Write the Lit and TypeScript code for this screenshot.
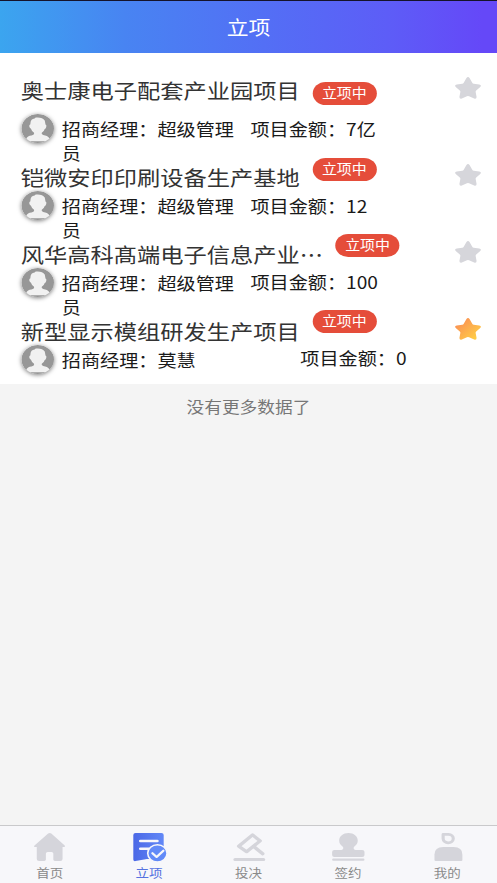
import { LitElement, html, svg, css } from "lit";
import { customElement, property } from "lit/decorators.js";
import { classMap } from "lit/directives/class-map.js";

interface Project {
  name: string;
  manager: string;
  amount: string;
  status: string;
  starred: boolean;
}

const projects: Project[] = [
  { name: "奥士康电子配套产业园项目", manager: "超级管理员", amount: "7亿", status: "立项中", starred: false },
  { name: "铠微安印印刷设备生产基地", manager: "超级管理员", amount: "12", status: "立项中", starred: false },
  { name: "风华高科髙端电子信息产业⋯", manager: "超级管理员", amount: "100", status: "立项中", starred: false },
  { name: "新型显示模组研发生产项目", manager: "莫慧", amount: "0", status: "立项中", starred: true },
];

const tabs = [
  {
    label: "首页",
    icon: svg`<path fill="currentColor" d="M12.8.6q1.4-1.1 2.8 0L27.5 12.4q1.1 1.4-.6 1.6h-1.3V26q0 2-2 2h-4.8q-1.400 0-1.400-1.400v-6q0-1.600-1.600-1.600h-3.400q-1.600 0-1.600 1.600v6q0 1.400-1.400 1.400H4.700q-2 0-2-2V14H1.300q-1.700-.2-.6-1.600z"/>`,
  },
  {
    label: "立项",
    icon: svg`
      <defs><linearGradient id="doc" x1="0" y1="0" x2="1" y2="0"><stop offset="0" stop-color="#4b68e6"/><stop offset="1" stop-color="#6288f7"/></linearGradient></defs>
      <path fill="url(#doc)" d="M1.500 0h23q2 0 2 2v17l-8 7h-7q-1.200 0-2.400.5L1.500 28.100Q-.5 28.500-.5 26.500V2q0-2 2-2z"/>
      <path stroke="#f7f7fa" stroke-width="2.600" stroke-linecap="round" d="M5.800 8h15M5.800 15.700h7.500"/>
      <circle cx="20.900" cy="20.300" r="8.600" fill="#628af8" stroke="#f7f7fa" stroke-width="1.400"/>
      <path fill="none" stroke="#f7f7fa" stroke-width="2.100" stroke-linecap="round" stroke-linejoin="round" d="M16.500 20.200l3.700 3.700 6-6.200"/>`,
  },
  {
    label: "投决",
    icon: svg`
      <path fill="none" stroke="currentColor" stroke-width="3.200" stroke-linejoin="round" d="M17.500 1.900l6.700 6L12.200 18.700l-7-5.500z"/>
      <path stroke="currentColor" stroke-width="3.200" stroke-linecap="round" d="M18.500 13.500l8 7.200M2 26.500h25.200"/>`,
  },
  {
    label: "签约",
    icon: svg`
      <path fill="currentColor" d="M14.800 0C19.500 0 23 3.300 23 7.600c0 2.800-1.200 4.500-3 6-1.200 1.100-.7 3.400 1 3.400h6q2 0 2 2v3q0 2-2 2H2.200q-2 0-2-2v-3q0-2 2-2h6.300c1.700 0 2.200-2.300 1-3.400-1.800-1.500-3-3.200-3-6C6.500 3.300 10 0 14.800 0z"/>
      <path stroke="currentColor" stroke-width="2.200" stroke-linecap="round" d="M1.300 26.700h26.600"/>`,
  },
  {
    label: "我的",
    icon: svg`
      <path fill="none" stroke="currentColor" stroke-width="2.800" stroke-linejoin="round" d="M9.900 1.400h4.800a4.500 4.200 0 1 1-4.800 4.200z"/>
      <path fill="currentColor" d="M2.200 27V21.500Q2.200 14 10 14h9.300Q27 14 27 21.500V27q0 1-1 1H3.200q-1 0-1-1z"/>`,
  },
];

@customElement("project-row")
class ProjectRow extends LitElement {
  @property({ attribute: false }) project!: Project;

  static styles = css`
    :host { display: block; }
    .head { display: flex; height: 26px; }
    .name { margin-top: -1px; font-size: 20.66px; line-height: 26px; color: #333; white-space: nowrap; }
    .badge {
      height: 23px;
      width: 57px;
      box-sizing: border-box;
      margin-left: 11.2px;
      margin-top: var(--badge-top, 0);
      border-radius: 12px;
      background: #e54d3a;
      color: #fff;
      font-size: 13.3px;
      line-height: 22.500px;
      text-align: center;
    }
    .star { width: 24px; height: 24px; margin: -2px 14.2px 0 auto; color: #d6d6db; }
    .meta { display: flex; margin-top: var(--meta-gap, 3px); font-size: 17px; line-height: 24px; color: #1a1a1a; }
    .avatar { flex: none; width: 29.4px; height: 29.4px; margin: -3.500px 0 -2px; border-radius: 50%; box-shadow: 0 1px 4px rgba(0, 0, 0, .5); }
    .manager { width: 168px; margin-left: 7px; flex: none; }
    .manager.wide { width: 212.4px; }
    .amount { margin-top: var(--amount-shift, 0); margin-left: -.3px; white-space: nowrap; }
  `;

  render() {
    const p = this.project;
    return html`
      <div class="head">
        <span class="name">${p.name}</span>
        <span class="badge">${p.status}</span>
        <svg class="star" viewBox="0 0 24 24">
          <defs><linearGradient id="gold" x1="0" y1="0" x2="1" y2="1"><stop offset=".2" stop-color="#fb9653"/><stop offset=".85" stop-color="#ffcb46"/></linearGradient></defs>
          <path fill=${p.starred ? "url(#gold)" : "currentColor"}
            d="M10.500 2.200q1.500-2.400 3 0l2.300 4.600q.4.800 1.300 1l4.900.7q2.400.6.900 2.500l-3.600 3.500q-.6.700-.5 1.500l.8 4.700q.2 2.600-2.100 1.800l-4.600-2.300q-.9-.5-1.800 0l-4.600 2.300q-2.300.8-2.100-1.800l.8-4.700q.1-.8-.5-1.500L1.100 11q-1.500-1.900.9-2.500l4.900-.7q.9-.2 1.300-1z"/>
        </svg>
      </div>
      <div class="meta">
        <svg class="avatar" viewBox="0 0 30 30">
          <defs><clipPath id="disc"><circle cx="15" cy="15" r="15"/></clipPath></defs>
          <circle cx="15" cy="15" r="15" fill="#979797"/>
          <path clip-path="url(#disc)" fill="#f1f1f1" d="M8.200 9.500Q8.500 4.800 12 4.500l1-.9q6-.7 8.200 3.100l.7 4.100q1.400.8.600 2.800-.4 1.500-1.300 1.700-.8 2.800-2.700 3.800v1.200q.6 1.200 4 2 3 .8 3.500 5.500H4q.5-4.700 3.500-5.500 3.700-.8 4-2v-1.200Q9.300 17.500 8.700 15q-1.300-.7-1.500-2.200-.3-1.900 1-2.300z"/>
        </svg>
        <span class=${classMap({ manager: true, wide: p.manager.length < 5 })}>招商经理：${p.manager}</span>
        <span class="amount">项目金额：${p.amount}</span>
      </div>
    `;
  }
}

@customElement("app-root")
class AppRoot extends LitElement {
  static styles = css`
    :host { display: block; width: 100vw; height: 100vh; overflow: hidden; }
    /* The screen is laid out in narrow units and widened to the full viewport. */
    .screen {
      display: flex;
      flex-direction: column;
      width: calc(100vw / 1.125);
      height: 100vh;
      transform: scaleX(1.125);
      transform-origin: 0 0;
      background: #f4f4f4;
      font-family: "Noto Sans CJK SC", sans-serif;
    }
    .bar {
      flex: none;
      box-sizing: border-box;
      height: 52.500px;
      border-top: 1px solid #15132b;
      background: linear-gradient(90deg, #3ba5ef 0%, #4884f2 25%, #536ff5 53%, #5d5df7 78%, #6548f8 97%);
      color: #fff;
      font-size: 19.4px;
      line-height: 51px;
      text-align: center;
    }
    .list { flex: none; background: #fff; padding: 25.500px 0 12px 18.5px; }
    .row:nth-child(1) { --badge-top: 3.500px; --meta-gap: 13px; }
    .row:nth-child(2) { --badge-top: -7.500px; --amount-shift: -.5px; }
    .row:nth-child(3) { --badge-top: -8.500px; --amount-shift: -1px; }
    .row:nth-child(4) { --badge-top: -9px; --amount-shift: -2.500px; }
    .end { flex: 1; padding-top: 11px; color: #777; font-size: 15.75px; line-height: 24px; text-align: center; }
    .tabs { flex: none; display: flex; box-sizing: border-box; height: 58px; border-top: 1px solid #c9c9cb; background: #f7f7fa; }
    .tab { flex: 1; display: flex; flex-direction: column; align-items: center; padding-top: 7px; color: #8a8a8a; font-size: 12px; line-height: 16px; }
    .tab.active { color: #5572e0; }
    .icon { width: 28px; height: 28px; overflow: visible; color: #d5d5db; margin-bottom: 4px; }
  `;

  render() {
    return html`
      <div class="screen">
        <header class="bar">立项</header>
        <main class="list">
          ${projects.map((p) => html`<project-row class="row" .project=${p}></project-row>`)}
        </main>
        <div class="end">没有更多数据了</div>
        <nav class="tabs">
          ${tabs.map(
            (t, i) => html`
              <div class=${classMap({ tab: true, active: i === 1 })}>
                <svg class="icon" viewBox="0 0 28 28">${t.icon}</svg>
                <span>${t.label}</span>
              </div>
            `
          )}
        </nav>
      </div>
    `;
  }
}
